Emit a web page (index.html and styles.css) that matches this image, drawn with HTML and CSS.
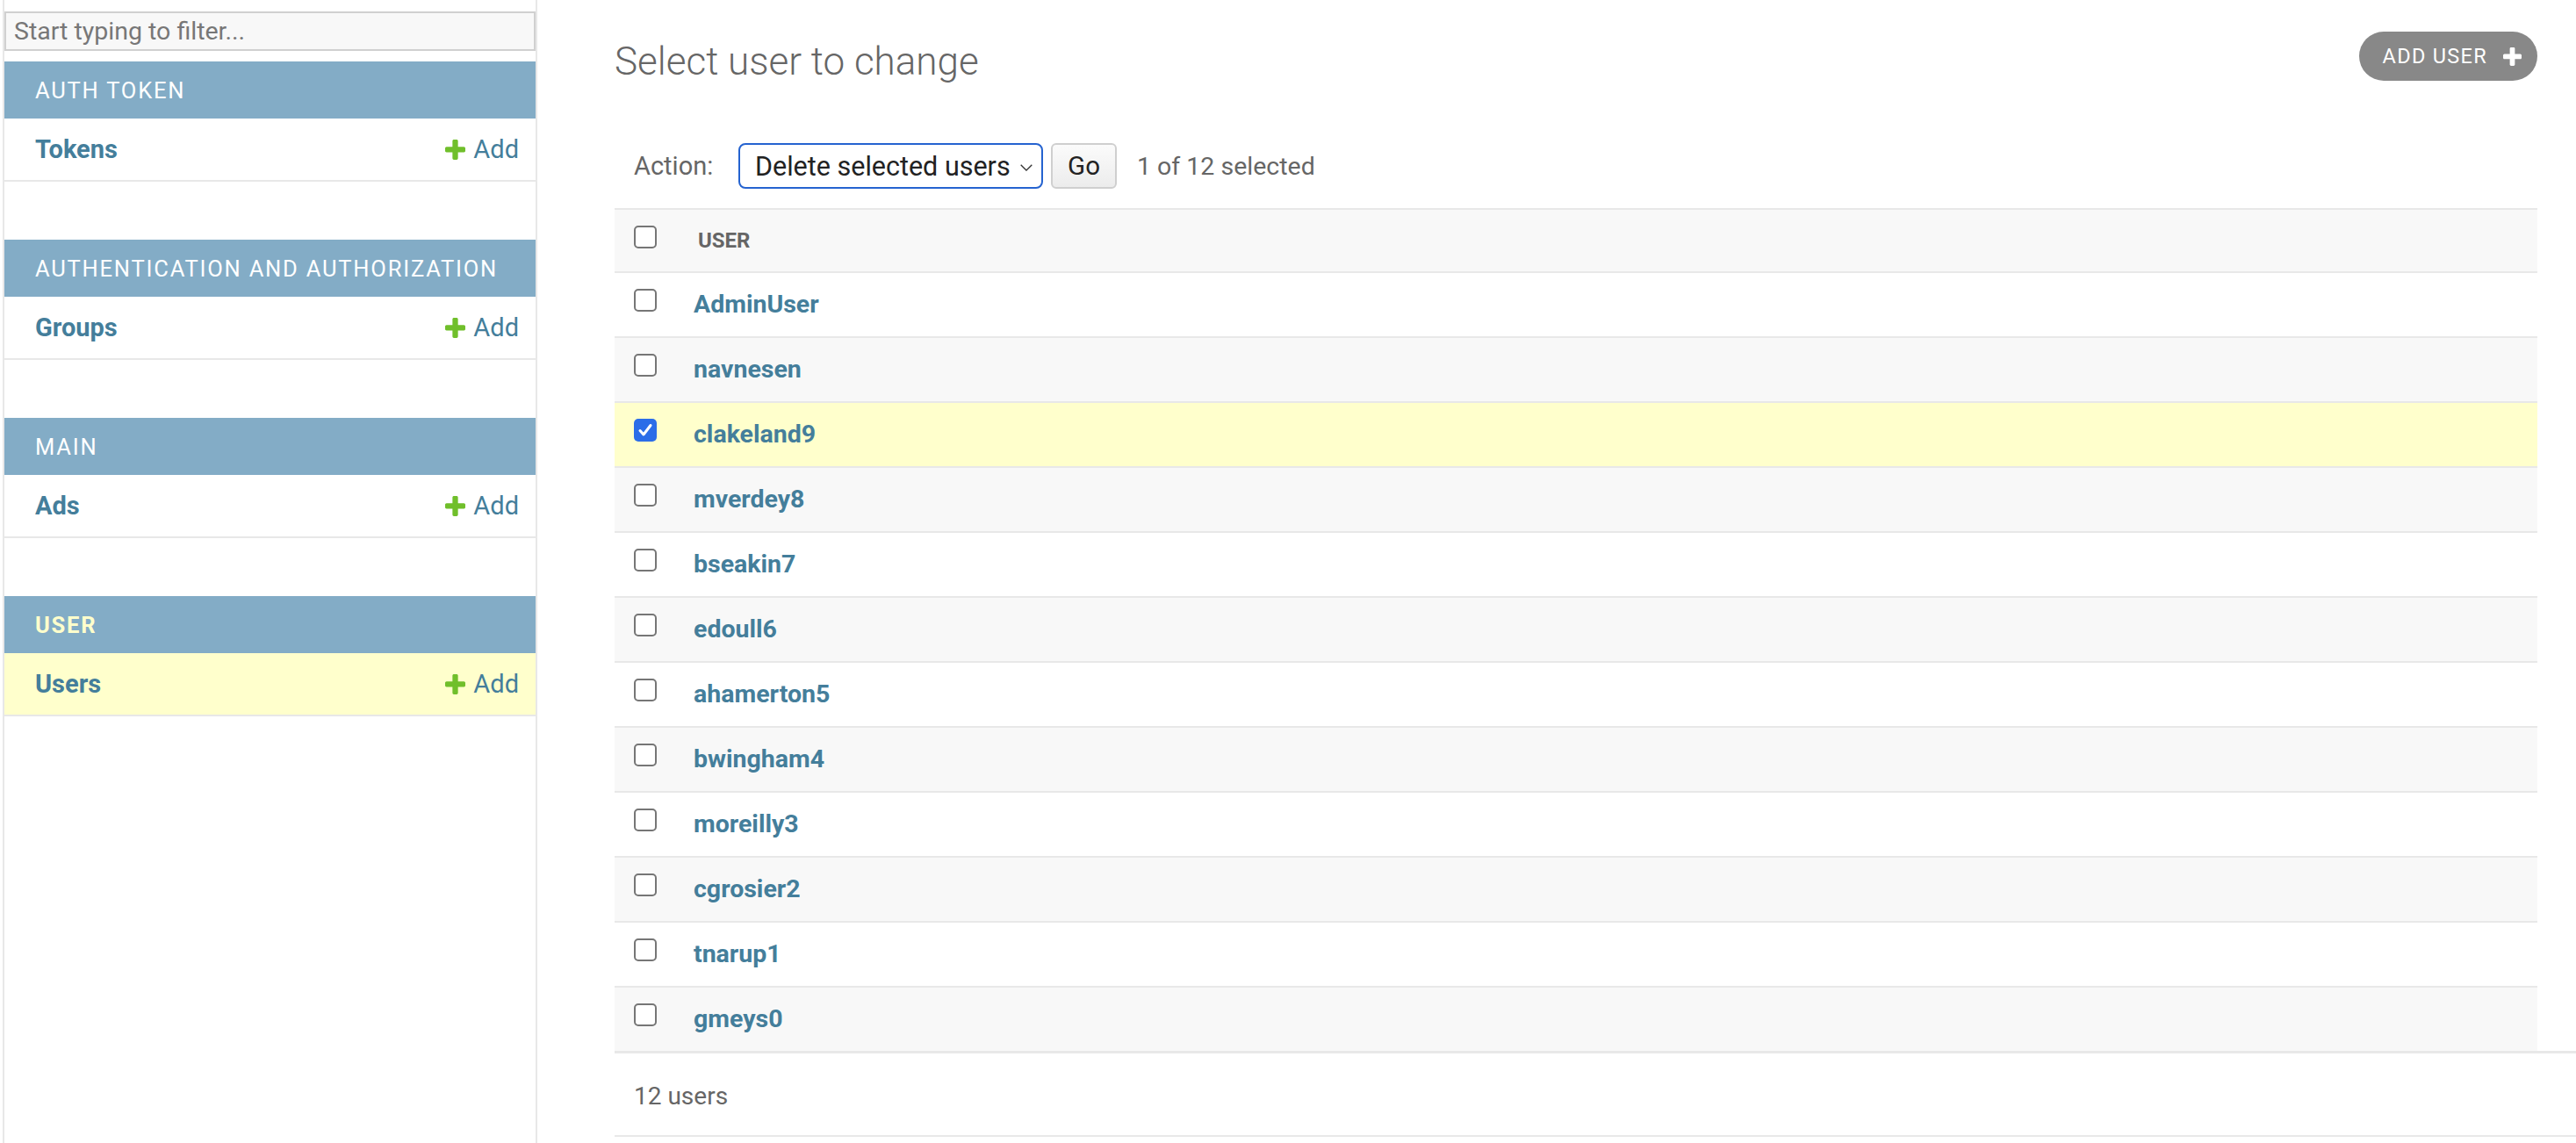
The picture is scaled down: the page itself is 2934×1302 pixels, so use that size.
FILE: index.html
```html
<!DOCTYPE html>
<html lang="en">
<head>
<meta charset="utf-8">
<title>Select user to change</title>
<link rel="stylesheet" href="styles.css">
</head>
<body>
<div class="page">
  <nav class="sidebar">
    <input class="filter" type="search" placeholder="Start typing to filter...">

    <div class="module">
      <div class="caption">Auth Token</div>
      <div class="model-row">
        <a class="model" href="#">Tokens</a>
        <a class="addlink" href="#"><svg class="plus" viewBox="192 192 1408 1408"><path d="M1600 796v192q0 40-28 68t-68 28h-416v416q0 40-28 68t-68 28h-192q-40 0-68-28t-28-68v-416h-416q-40 0-68-28t-28-68v-192q0-40 28-68t68-28h416v-416q0-40 28-68t68-28h192q40 0 68 28t28 68v416h416q40 0 68 28t28 68z"/></svg>Add</a>
      </div>
    </div>

    <div class="module">
      <div class="caption">Authentication and Authorization</div>
      <div class="model-row">
        <a class="model" href="#">Groups</a>
        <a class="addlink" href="#"><svg class="plus" viewBox="192 192 1408 1408"><path d="M1600 796v192q0 40-28 68t-68 28h-416v416q0 40-28 68t-68 28h-192q-40 0-68-28t-28-68v-416h-416q-40 0-68-28t-28-68v-192q0-40 28-68t68-28h416v-416q0-40 28-68t68-28h192q40 0 68 28t28 68v416h416q40 0 68 28t28 68z"/></svg>Add</a>
      </div>
    </div>

    <div class="module">
      <div class="caption">Main</div>
      <div class="model-row">
        <a class="model" href="#">Ads</a>
        <a class="addlink" href="#"><svg class="plus" viewBox="192 192 1408 1408"><path d="M1600 796v192q0 40-28 68t-68 28h-416v416q0 40-28 68t-68 28h-192q-40 0-68-28t-28-68v-416h-416q-40 0-68-28t-28-68v-192q0-40 28-68t68-28h416v-416q0-40 28-68t68-28h192q40 0 68 28t28 68v416h416q40 0 68 28t28 68z"/></svg>Add</a>
      </div>
    </div>

    <div class="module current-app">
      <div class="caption">User</div>
      <div class="model-row current">
        <a class="model" href="#">Users</a>
        <a class="addlink" href="#"><svg class="plus" viewBox="192 192 1408 1408"><path d="M1600 796v192q0 40-28 68t-68 28h-416v416q0 40-28 68t-68 28h-192q-40 0-68-28t-28-68v-416h-416q-40 0-68-28t-28-68v-192q0-40 28-68t68-28h416v-416q0-40 28-68t68-28h192q40 0 68 28t28 68v416h416q40 0 68 28t28 68z"/></svg>Add</a>
      </div>
    </div>
  </nav>

  <main class="content">
    <div class="content-head">
      <h1>Select user to change</h1>
      <a class="add-btn" href="#">Add user<svg class="tool-plus" viewBox="192 192 1408 1408"><path d="M1600 796v192q0 40-28 68t-68 28h-416v416q0 40-28 68t-68 28h-192q-40 0-68-28t-28-68v-416h-416q-40 0-68-28t-28-68v-192q0-40 28-68t68-28h416v-416q0-40 28-68t68-28h192q40 0 68 28t28 68v416h416q40 0 68 28t28 68z"/></svg></a>
    </div>

    <div class="actions">
      <span class="action-label">Action:</span>
      <div class="select">Delete selected users<svg class="chev" viewBox="0 0 14 8"><polyline points="0.7,0.7 7,7 13.3,0.7"/></svg></div>
      <div class="go">Go</div>
      <span class="count">1 of 12 selected</span>
    </div>

    <div class="results">
      <div class="row head"><span class="cb"></span><span class="col-head">User</span></div>
      <div class="row"><span class="cb"></span><a class="user" href="#">AdminUser</a></div>
      <div class="row alt"><span class="cb"></span><a class="user" href="#">navnesen</a></div>
      <div class="row selected"><span class="cb checked"><svg viewBox="0 0 26 26"><polyline points="7,13.5 11,18 19,7.5"/></svg></span><a class="user" href="#">clakeland9</a></div>
      <div class="row alt"><span class="cb"></span><a class="user" href="#">mverdey8</a></div>
      <div class="row"><span class="cb"></span><a class="user" href="#">bseakin7</a></div>
      <div class="row alt"><span class="cb"></span><a class="user" href="#">edoull6</a></div>
      <div class="row"><span class="cb"></span><a class="user" href="#">ahamerton5</a></div>
      <div class="row alt"><span class="cb"></span><a class="user" href="#">bwingham4</a></div>
      <div class="row"><span class="cb"></span><a class="user" href="#">moreilly3</a></div>
      <div class="row alt"><span class="cb"></span><a class="user" href="#">cgrosier2</a></div>
      <div class="row"><span class="cb"></span><a class="user" href="#">tnarup1</a></div>
      <div class="row alt last"><span class="cb"></span><a class="user" href="#">gmeys0</a></div>
    </div>

    <p class="paginator">12 users</p>
  </main>
</div>
</body>
</html>
```

FILE: styles.css
```css
html, body {
  margin: 0;
  padding: 0;
  background: #fff;
}

body {
  font-family: Roboto, "Liberation Sans", Arial, sans-serif;
  color: #333;
  overflow: hidden;
}

a {
  text-decoration: none;
}

.page {
  display: flex;
  align-items: stretch;
  min-height: 1302px;
}

/* ---------- Sidebar ---------- */
.sidebar {
  flex: 0 0 605px;
  margin-left: 3px;
  border-left: 2px solid #e8e8e8;
  border-right: 2px solid #e8e8e8;
  min-height: 1302px;
}

.filter {
  display: block;
  box-sizing: border-box;
  width: 100%;
  height: 45px;
  margin: 13px 0 12px;
  padding: 0 9px;
  border: 2px solid #d0d0d0;
  border-radius: 0;
  background: #f8f8f8;
  font-family: Roboto, "Liberation Sans", sans-serif;
  font-size: 28.5px;
  color: #333;
  outline: none;
  -webkit-appearance: none;
  appearance: none;
}

.filter::placeholder {
  color: #777;
}

.module {
  margin-bottom: 66px;
}

.caption {
  box-sizing: border-box;
  height: 65px;
  padding: 18px 0 0 35px;
  background: #83acc6;
  color: #fff;
  font-size: 25.5px;
  line-height: 30px;
  letter-spacing: 1.8px;
  text-transform: uppercase;
}

.current-app .caption {
  color: #ffc;
  font-weight: 700;
}

.model-row {
  box-sizing: border-box;
  height: 72px;
  display: flex;
  justify-content: space-between;
  align-items: flex-start;
  padding: 18px 19px 0 35px;
  border-bottom: 2px solid #e8e8e8;
}

.model-row.current {
  background: #ffc;
}

.model {
  font-size: 29px;
  line-height: 34px;
  font-weight: 700;
  color: #447e9b;
}

.addlink {
  display: flex;
  align-items: center;
  gap: 9px;
  font-size: 29px;
  line-height: 34px;
  color: #447e9b;
}

.plus {
  width: 23px;
  height: 23px;
  fill: #70bf2b;
}

/* ---------- Content ---------- */
.content {
  flex: 1 1 auto;
  min-width: 0;
  padding: 36px 44px 0 88px;
}

.content-head {
  display: flex;
  justify-content: space-between;
  align-items: flex-start;
  height: 57px;
}

h1 {
  margin: 9px 0 0;
  font-size: 44px;
  line-height: 51px;
  font-weight: 300;
  color: #666;
}

.add-btn {
  display: flex;
  align-items: center;
  gap: 18px;
  height: 56px;
  box-sizing: border-box;
  padding: 0 18px 0 27px;
  border-radius: 28px;
  background: #888;
  color: #fff;
  font-size: 23.5px;
  letter-spacing: 1.3px;
  text-transform: uppercase;
}

.tool-plus {
  width: 21px;
  height: 21px;
  fill: #fff;
}

.actions {
  display: flex;
  align-items: center;
  height: 52px;
  margin-top: 70px;
  padding-left: 22px;
}

.action-label {
  flex: 0 0 119px;
  font-size: 29px;
  color: #666;
}

.select {
  box-sizing: border-box;
  width: 347px;
  height: 52px;
  display: flex;
  align-items: center;
  justify-content: space-between;
  padding: 0 10px 0 17px;
  border: 2px solid #2563d0;
  border-radius: 8px;
  font-size: 30.5px;
  color: #222;
  background: #fff;
}

.chev {
  width: 14px;
  height: 8px;
  margin-top: 4px;
  fill: none;
  stroke: #333;
  stroke-width: 1.3;
}

.go {
  box-sizing: border-box;
  width: 75px;
  height: 52px;
  margin-left: 9px;
  display: flex;
  align-items: center;
  justify-content: center;
  border: 2px solid #cfcfcf;
  border-radius: 6px;
  background: linear-gradient(#fbfbfb, #ececec);
  font-size: 29.5px;
  color: #222;
}

.count {
  margin-left: 23px;
  font-size: 28.5px;
  color: #666;
}

.results {
  margin-top: 22px;
  border-top: 2px solid #e8e8e8;
}

.row {
  box-sizing: border-box;
  height: 74px;
  display: flex;
  align-items: flex-start;
  padding-left: 22px;
  border-bottom: 2px solid #e8e8e8;
  background: #fff;
}

.row.alt {
  background: #f8f8f8;
}

.row.selected {
  background: #ffc;
}

.row.head {
  height: 72px;
  background: #f8f8f8;
}

.row.last {
  height: 72px;
  border-bottom: none;
}

.cb {
  flex: 0 0 auto;
  box-sizing: border-box;
  width: 26px;
  height: 26px;
  margin-top: 18px;
  border: 2px solid #767676;
  border-radius: 5px;
  background: #fff;
}

.cb.checked {
  border: none;
  background: #2b6de8;
}

.cb.checked svg {
  display: block;
  width: 26px;
  height: 26px;
  fill: none;
  stroke: #fff;
  stroke-width: 3;
  stroke-linecap: round;
  stroke-linejoin: round;
}

.col-head {
  margin: 21px 0 0 47px;
  font-size: 24px;
  line-height: 28px;
  font-weight: 700;
  color: #666;
  text-transform: uppercase;
}

.user {
  margin: 19px 0 0 42px;
  font-size: 28.5px;
  line-height: 33px;
  font-weight: 700;
  color: #447e9b;
}

.paginator {
  box-sizing: border-box;
  height: 98px;
  margin: 0 -44px 0 0;
  padding: 32px 0 0 22px;
  border-top: 3px solid #e8e8e8;
  border-bottom: 2px solid #e8e8e8;
  font-size: 28px;
  line-height: 33px;
  color: #666;
}
```
